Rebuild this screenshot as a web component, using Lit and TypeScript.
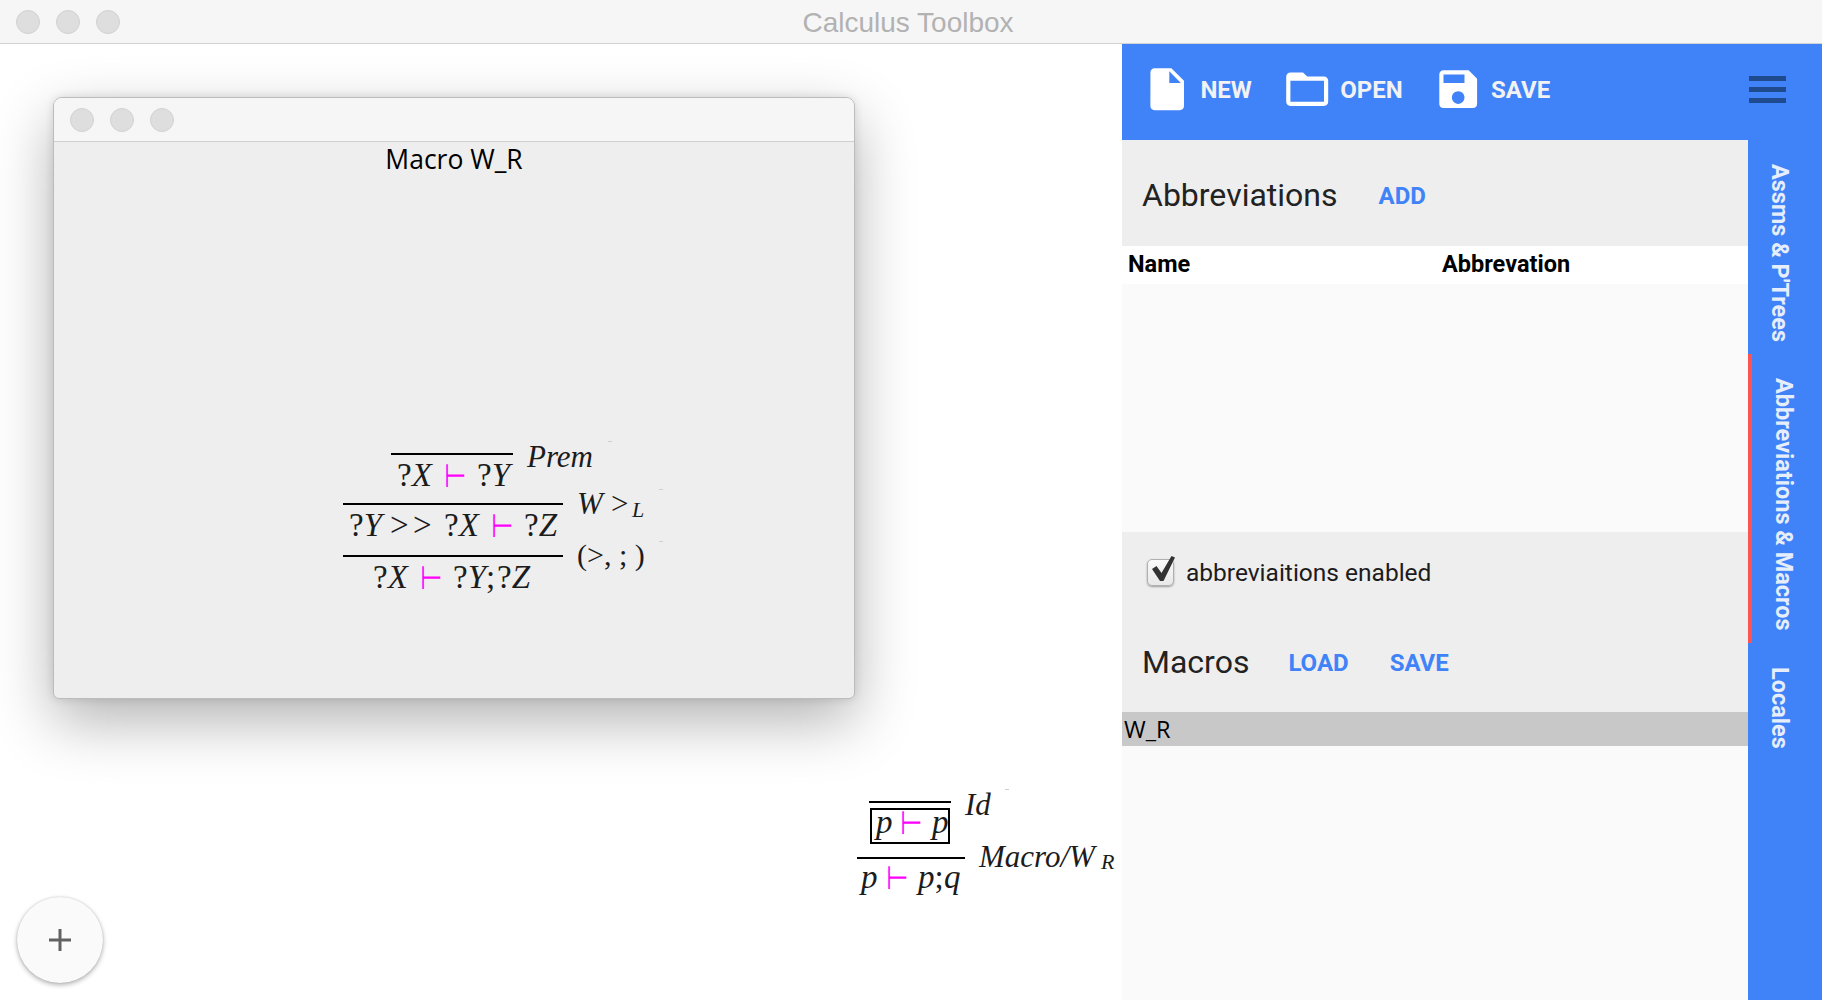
import { LitElement, html, css, svg, TemplateResult } from "lit";
import { customElement, property } from "lit/decorators.js";

interface Piece { x: number; b: number; c: TemplateResult | string; s?: number; k?: string; }
interface Rule { x: number; y: number; w: number; }
interface Box { x: number; y: number; w: number; h: number; }
interface Speck { x: number; y: number; }

const FS = 33;
const LB = 31;
const T = (x: number, b: number): Piece => ({ x, b: b + 2, c: "⊢", s: 27, k: "ts" });
const P = (x: number, b: number, c: TemplateResult | string, s = FS): Piece => ({ x, b: b + 1, c, s });

const proof1 = {
  rules: [
    { x: 391, y: 453, w: 122 },
    { x: 343, y: 503, w: 220 },
    { x: 343, y: 555, w: 220 },
  ] as Rule[],
  pieces: [
    P(397, 485, html`?<i>X</i>`), T(444, 485), P(477, 485, html`?<i>Y</i>`),
    P(527, 466, html`<i>Prem</i>`, LB),
    P(349, 535, html`?<i>Y</i>`), P(390, 535, ">"), P(413, 535, ">"),
    P(444, 535, html`?<i>X</i>`), T(491, 535), P(524, 535, html`?<i>Z</i>`),
    P(577, 513, html`<i>W</i>`, LB), P(611, 513, ">", LB), P(632, 516, html`<i>L</i>`, 22),
    P(373, 587, html`?<i>X</i>`), T(420, 587), P(453, 587, html`?<i>Y</i>;`), P(497, 587, html`?<i>Z</i>`),
    P(577, 564, html`(&gt;, ; )`, 30),
  ] as Piece[],
  boxes: [] as Box[],
  specks: [{ x: 608, y: 441 }, { x: 659, y: 489 }, { x: 659, y: 541 }] as Speck[],
};

const proof2 = {
  rules: [
    { x: 869, y: 801, w: 82 },
    { x: 857, y: 857, w: 108 },
  ] as Rule[],
  pieces: [
    P(876, 832, html`<i>p</i>`), T(900, 832), P(932, 832, html`<i>p</i>`),
    P(965, 814, html`<i>Id</i>`, LB),
    P(861, 887, html`<i>p</i>`), T(886, 887), P(918, 887, html`<i>p</i>;`), P(944, 887, html`<i>q</i>`),
    P(979, 866, html`<i>Macro/W</i>`, LB), P(1101, 868, html`<i>R</i>`, 22),
  ] as Piece[],
  boxes: [{ x: 870, y: 808, w: 80, h: 36 }] as Box[],
  specks: [{ x: 1005, y: 789 }] as Speck[],
};

@customElement("proof-canvas")
class ProofCanvas extends LitElement {
  @property({ type: Object }) data: any = null;
  @property({ type: Number }) ox = 0;
  @property({ type: Number }) oy = 0;

  static styles = css`
    :host { position: absolute; left: 0; top: 0; width: 0; height: 0; display: block; }
    .m {
      position: absolute;
      height: 0;
      line-height: 0;
      white-space: pre;
      font-family: "Liberation Serif", serif;
      color: #1c1c1c;
    }
    .m.ts {
      font-family: "DejaVu Sans", sans-serif;
      color: #ff00ff;
      transform: scale(0.95, 1.2);
      transform-origin: 0 9.3px;
    }
    .rule { position: absolute; height: 2px; background: #000; }
    .box { position: absolute; box-sizing: border-box; border: 2px solid #000; }
    .speck { position: absolute; width: 4px; height: 1px; background: #cfcfcf; }
  `;

  render() {
    const d = this.data;
    if (!d) return html``;
    return html`
      ${d.rules.map((r: Rule) => html`<div class="rule" style="left:${r.x - this.ox}px;top:${r.y - this.oy}px;width:${r.w}px"></div>`)}
      ${d.boxes.map((r: Box) => html`<div class="box" style="left:${r.x - this.ox}px;top:${r.y - this.oy}px;width:${r.w}px;height:${r.h}px"></div>`)}
      ${d.specks.map((r: Speck) => html`<div class="speck" style="left:${r.x - this.ox}px;top:${r.y - this.oy}px"></div>`)}
      ${d.pieces.map((p: Piece) => {
        const s = p.s ?? FS;
        const off = (p.k === "ts" ? 0.346 : 0.3375) * s;
        return html`<span class="m ${p.k ?? ""}" style="left:${p.x - this.ox}px;top:${p.b - this.oy - off}px;font-size:${s}px">${p.c}</span>`;
      })}
    `;
  }
}

const icon = (d: string) => html`<svg class="ico" viewBox="0 0 24 24" aria-hidden="true">${svg`<path d=${d} fill="#fff"></path>`}</svg>`;
const ICON_NEW = "M6 2c-1.1 0-1.99.9-1.99 2L4 20c0 1.1.89 2 1.99 2H18c1.1 0 2-.9 2-2V8l-6-6H6zm7 7V3.5L18.5 9H13z";
const ICON_OPEN = "M20 6h-8l-2-2H4c-1.1 0-1.99.9-1.99 2L2 18c0 1.1.9 2 2 2h16c1.1 0 2-.9 2-2V8c0-1.1-.9-2-2-2zm0 12H4V8h16v10z";
const ICON_SAVE = "M17 3H5c-1.11 0-2 .9-2 2v14c0 1.1.89 2 2 2h14c1.1 0 2-.9 2-2V7l-4-4zm-5 16c-1.66 0-3-1.34-3-3s1.34-3 3-3 3 1.34 3 3-1.34 3-3 3zm3-10H5V5h10v4z";

@customElement("app-root")
class AppRoot extends LitElement {
  static styles = css`
    :host {
      display: flex;
      flex-direction: column;
      width: 1822px;
      height: 1000px;
      overflow: hidden;
      background: #fff;
      font-family: Roboto, "Liberation Sans", sans-serif;
    }
    .lights { display: flex; gap: 16px; }
    .light {
      box-sizing: border-box;
      width: 24px;
      height: 24px;
      border-radius: 50%;
      background: #dedede;
      border: 1px solid #d2d2d2;
    }
    .titlebar {
      flex: none;
      height: 44px;
      box-sizing: border-box;
      display: grid;
      grid-template-columns: 1fr auto 1fr;
      align-items: center;
      padding: 0 16px;
      background: #f6f6f6;
      border-bottom: 1px solid #d2d2d2;
    }
    .apptitle {
      font: 28px "Liberation Sans", sans-serif;
      color: #b2b2b2;
      margin: 3px 0 0 -6px;
    }
    .body { flex: 1; display: flex; min-height: 0; }
    .main { position: relative; flex: none; width: 1122px; background: #fff; }

    .window {
      position: absolute;
      left: 53px;
      top: 53px;
      width: 802px;
      height: 602px;
      box-sizing: border-box;
      background: #eeeeee;
      border: 1px solid #bcbcbc;
      border-radius: 9px 9px 6px 6px;
      box-shadow: 0 22px 60px rgba(0, 0, 0, 0.3), 0 0 10px rgba(0, 0, 0, 0.12);
      display: flex;
      flex-direction: column;
    }
    .wintitle {
      flex: none;
      height: 44px;
      box-sizing: border-box;
      display: flex;
      align-items: center;
      padding: 0 16px;
      background: #f6f6f6;
      border-bottom: 1px solid #d0d0d0;
      border-radius: 8px 8px 0 0;
    }
    .macroname {
      text-align: center;
      font: 26.5px "Open Sans", sans-serif;
      color: #000;
      line-height: 34px;
    }
    .fab {
      position: absolute;
      left: 17px;
      top: 853px;
      width: 86px;
      height: 86px;
      border-radius: 50%;
      background: #fafafa;
      border: none;
      padding: 0;
      box-shadow: 0 2px 5px rgba(0, 0, 0, 0.3), 0 0 2px rgba(0, 0, 0, 0.15);
      display: flex;
      align-items: center;
      justify-content: center;
    }
    .fab svg { width: 22px; height: 22px; display: block; }

    .side { flex: 1; display: flex; flex-direction: column; min-width: 0; }
    .header {
      flex: none;
      height: 96px;
      box-sizing: border-box;
      background: #4083f8;
      display: flex;
      align-items: flex-start;
      padding: 20px 36px 0 20px;
      color: #fff;
    }
    .hbtn {
      display: flex;
      align-items: center;
      gap: 8px;
      margin-right: 30px;
      font-size: 24px;
      font-weight: 700;
      color: #f2f2f2;
      height: 52px;
    }
    .ico { width: 50.4px; height: 50.4px; display: block; flex: none; margin-bottom: 2px; }
    .burger {
      margin-left: auto;
      margin-top: 12px;
      width: 37px;
      display: flex;
      flex-direction: column;
      gap: 6px;
    }
    .burger span { height: 5px; background: #1f4a8e; display: block; }

    .lower { flex: 1; display: flex; min-height: 0; }
    .content { flex: 1; display: flex; flex-direction: column; background: #fafafa; min-width: 0; }
    .section-head {
      flex: none;
      height: 106px;
      box-sizing: border-box;
      background: #eeeeee;
      display: flex;
      align-items: center;
      padding: 4px 0 0 20px;
      gap: 41px;
    }
    h2 { margin: 0; font-size: 32px; font-weight: 400; color: #222; }
    .link { font-size: 24px; font-weight: 700; color: #4083f8; position: relative; top: 1px; }
    .thead {
      flex: none;
      height: 38px;
      background: #fff;
      display: grid;
      grid-template-columns: 314px 1fr;
      align-items: center;
      padding: 0 0 2px 6px;
      box-sizing: border-box;
      font-size: 23.5px;
      font-weight: 700;
      color: #000;
    }
    .list1 { flex: none; height: 248px; background: #fafafa; }
    .gray { flex: none; height: 180px; background: #eeeeee; display: flex; flex-direction: column; }
    .check {
      display: flex;
      align-items: center;
      gap: 12px;
      padding: 27px 0 0 25px;
      height: 26px;
      color: #1c1c1c;
      font-size: 24.5px;
      font-weight: 400;
    }
    .cb {
      position: relative;
      flex: none;
      box-sizing: border-box;
      width: 27px;
      height: 27px;
      border-radius: 5px;
      background: linear-gradient(#fafafa, #e8e8e8);
      border: 1px solid #b0b0b0;
      box-shadow: 0 1px 2px rgba(0, 0, 0, 0.35);
    }
    .cb svg { position: absolute; left: 3px; top: -6px; width: 26px; height: 30px; overflow: visible; }
    .macros {
      display: flex;
      align-items: center;
      padding: 0 0 0 20px;
      margin-top: 52px;
      height: 50px;
    }
    .macros h2 { margin-right: 39px; }
    .macros .link + .link { margin-left: 41px; }
    .selrow {
      flex: none;
      height: 34px;
      background: #c8c8c8;
      display: flex;
      align-items: center;
      padding-left: 2px;
      font: 23.5px "Open Sans", sans-serif;
      color: #000;
    }
    .rest { flex: 1; background: #fafafa; }

    .rail {
      flex: none;
      width: 74px;
      background: #4083f8;
      display: flex;
      flex-direction: column;
      align-items: stretch;
    }
    .tab {
      box-sizing: border-box;
      writing-mode: vertical-rl;
      padding: 24px 30px 12px 0;
      text-align: left;
      font-size: 23.5px;
      font-weight: 700;
      line-height: 24px;
      color: #e6eefb;
    }
    .tab.on { border-left: 4px solid #ff5252; padding-right: 26px; }
  `;

  render() {
    return html`
      <div class="titlebar">
        <div class="lights"><div class="light"></div><div class="light"></div><div class="light"></div></div>
        <div class="apptitle">Calculus Toolbox</div>
        <div></div>
      </div>
      <div class="body">
        <div class="main">
          <div class="window">
            <div class="wintitle">
              <div class="lights"><div class="light"></div><div class="light"></div><div class="light"></div></div>
            </div>
            <div class="macroname">Macro W_R</div>
            <proof-canvas .data=${proof1} .ox=${54} .oy=${98}></proof-canvas>
          </div>
          <proof-canvas .data=${proof2} .ox=${0} .oy=${44}></proof-canvas>
          <div class="fab">
            <svg viewBox="0 0 22 22" aria-hidden="true"><path d="M9.5 0h3v9.5H22v3h-9.5V22h-3v-9.5H0v-3h9.5z" fill="#616161"></path></svg>
          </div>
        </div>
        <div class="side">
          <div class="header">
            <div class="hbtn">${icon(ICON_NEW)}<span>NEW</span></div>
            <div class="hbtn">${icon(ICON_OPEN)}<span>OPEN</span></div>
            <div class="hbtn">${icon(ICON_SAVE)}<span>SAVE</span></div>
            <div class="burger"><span></span><span></span><span></span></div>
          </div>
          <div class="lower">
            <div class="content">
              <div class="section-head"><h2>Abbreviations</h2><span class="link">ADD</span></div>
              <div class="thead"><span>Name</span><span>Abbrevation</span></div>
              <div class="list1"></div>
              <div class="gray">
                <div class="check">
                  <span class="cb"><svg viewBox="0 0 26 30" aria-hidden="true"><path d="M1 15 L5.5 12 L10.5 19 L20.5 2 L24 3.5 L12.5 27 L9 27 Z" fill="#333"></path></svg></span>
                  <span>abbreviaitions enabled</span>
                </div>
                <div class="macros"><h2>Macros</h2><span class="link">LOAD</span><span class="link">SAVE</span></div>
              </div>
              <div class="selrow">W_R</div>
              <div class="rest"></div>
            </div>
            <div class="rail">
              <div class="tab">Assms &amp; P'Trees</div>
              <div class="tab on">Abbreviations &amp; Macros</div>
              <div class="tab">Locales</div>
            </div>
          </div>
        </div>
      </div>
    `;
  }
}
